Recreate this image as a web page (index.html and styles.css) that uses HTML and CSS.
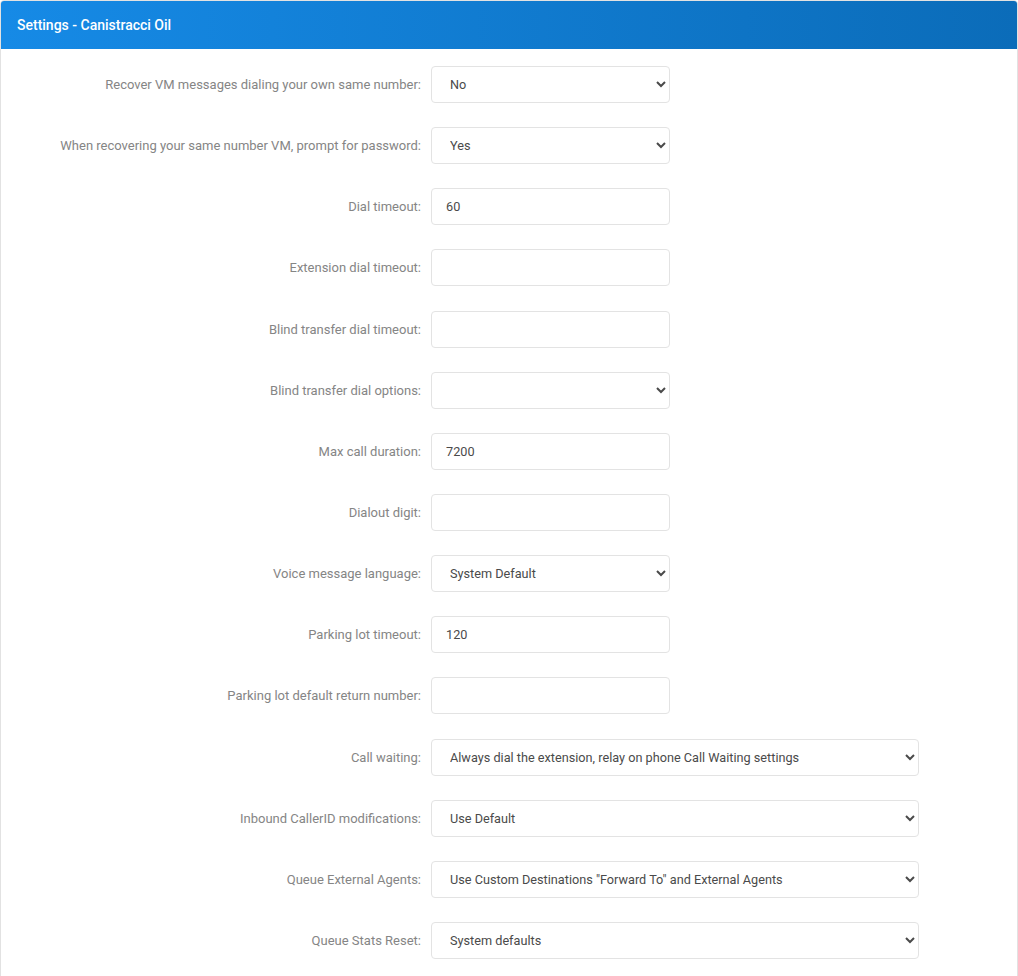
FILE: index.html
```html
<!DOCTYPE html>
<html>
<head>
  <meta charset="utf-8">
  <title>Settings - Canistracci Oil</title>
  <link rel="stylesheet" href="styles.css">
</head>
<body>
  <div class="panel">
    <div class="panel-heading">Settings - Canistracci Oil</div>
    <form class="panel-body">
      <label class="field-label" for="recover_vm">Recover VM messages dialing your own same number:</label>
      <select id="recover_vm" class="control">
        <option>No</option>
        <option>Yes</option>
      </select>

      <label class="field-label" for="prompt_pw">When recovering your same number VM, prompt for password:</label>
      <select id="prompt_pw" class="control">
        <option>Yes</option>
        <option>No</option>
      </select>

      <label class="field-label" for="dial_timeout">Dial timeout:</label>
      <input id="dial_timeout" class="control" type="text" value="60">

      <label class="field-label" for="ext_timeout">Extension dial timeout:</label>
      <input id="ext_timeout" class="control" type="text">

      <label class="field-label" for="blind_timeout">Blind transfer dial timeout:</label>
      <input id="blind_timeout" class="control" type="text">

      <label class="field-label" for="blind_options">Blind transfer dial options:</label>
      <select id="blind_options" class="control">
        <option></option>
      </select>

      <label class="field-label" for="max_duration">Max call duration:</label>
      <input id="max_duration" class="control" type="text" value="7200">

      <label class="field-label" for="dialout">Dialout digit:</label>
      <input id="dialout" class="control" type="text">

      <label class="field-label" for="vm_lang">Voice message language:</label>
      <select id="vm_lang" class="control">
        <option>System Default</option>
      </select>

      <label class="field-label" for="park_timeout">Parking lot timeout:</label>
      <input id="park_timeout" class="control" type="text" value="120">

      <label class="field-label" for="park_return">Parking lot default return number:</label>
      <input id="park_return" class="control" type="text">

      <label class="field-label" for="call_waiting">Call waiting:</label>
      <select id="call_waiting" class="control wide">
        <option>Always dial the extension, relay on phone Call Waiting settings</option>
      </select>

      <label class="field-label" for="callerid">Inbound CallerID modifications:</label>
      <select id="callerid" class="control wide">
        <option>Use Default</option>
      </select>

      <label class="field-label" for="ext_agents">Queue External Agents:</label>
      <select id="ext_agents" class="control wide">
        <option>Use Custom Destinations "Forward To" and External Agents</option>
      </select>

      <label class="field-label" for="stats_reset">Queue Stats Reset:</label>
      <select id="stats_reset" class="control wide">
        <option>System defaults</option>
      </select>
    </form>
  </div>
</body>
</html>
```

FILE: styles.css
```css
*, *:before, *:after {
  box-sizing: border-box;
}
html, body {
  margin: 0;
  padding: 0;
  background: #fff;
}
body {
  font-family: Roboto, "Liberation Sans", sans-serif;
  font-size: 13px;
  color: #444;
}

.panel {
  width: 1018px;
  border: 1px solid #e2e2e2;
  border-radius: 4px 4px 0 0;
  min-height: 980px;
}
.panel-heading {
  height: 48px;
  line-height: 48px;
  padding: 0 16px;
  color: #fff;
  font-size: 14px;
  font-weight: 500;
  background: linear-gradient(to right, #168ae6, #0b6cb9);
  border-radius: 3px 3px 0 0;
}

.panel-body {
  display: grid;
  grid-template-columns: 420px auto;
  column-gap: 10px;
  row-gap: 24.15px;
  justify-items: start;
  align-items: center;
  padding: 17px 0 20px;
  margin: 0;
}

.field-label {
  justify-self: end;
  color: #858585;
  font-size: 13px;
}

.control {
  width: 239px;
  height: 37px;
  padding: 0 14px;
  border: 1px solid #e3e3e3;
  border-radius: 4px;
  background: #fff;
  color: #4a4a4a;
  font-family: Roboto, "Liberation Sans", sans-serif;
  font-size: 12.7px;
  outline: none;
}
select.control {
  padding-left: 14px;
}
.control.wide {
  width: 488px;
}
```
